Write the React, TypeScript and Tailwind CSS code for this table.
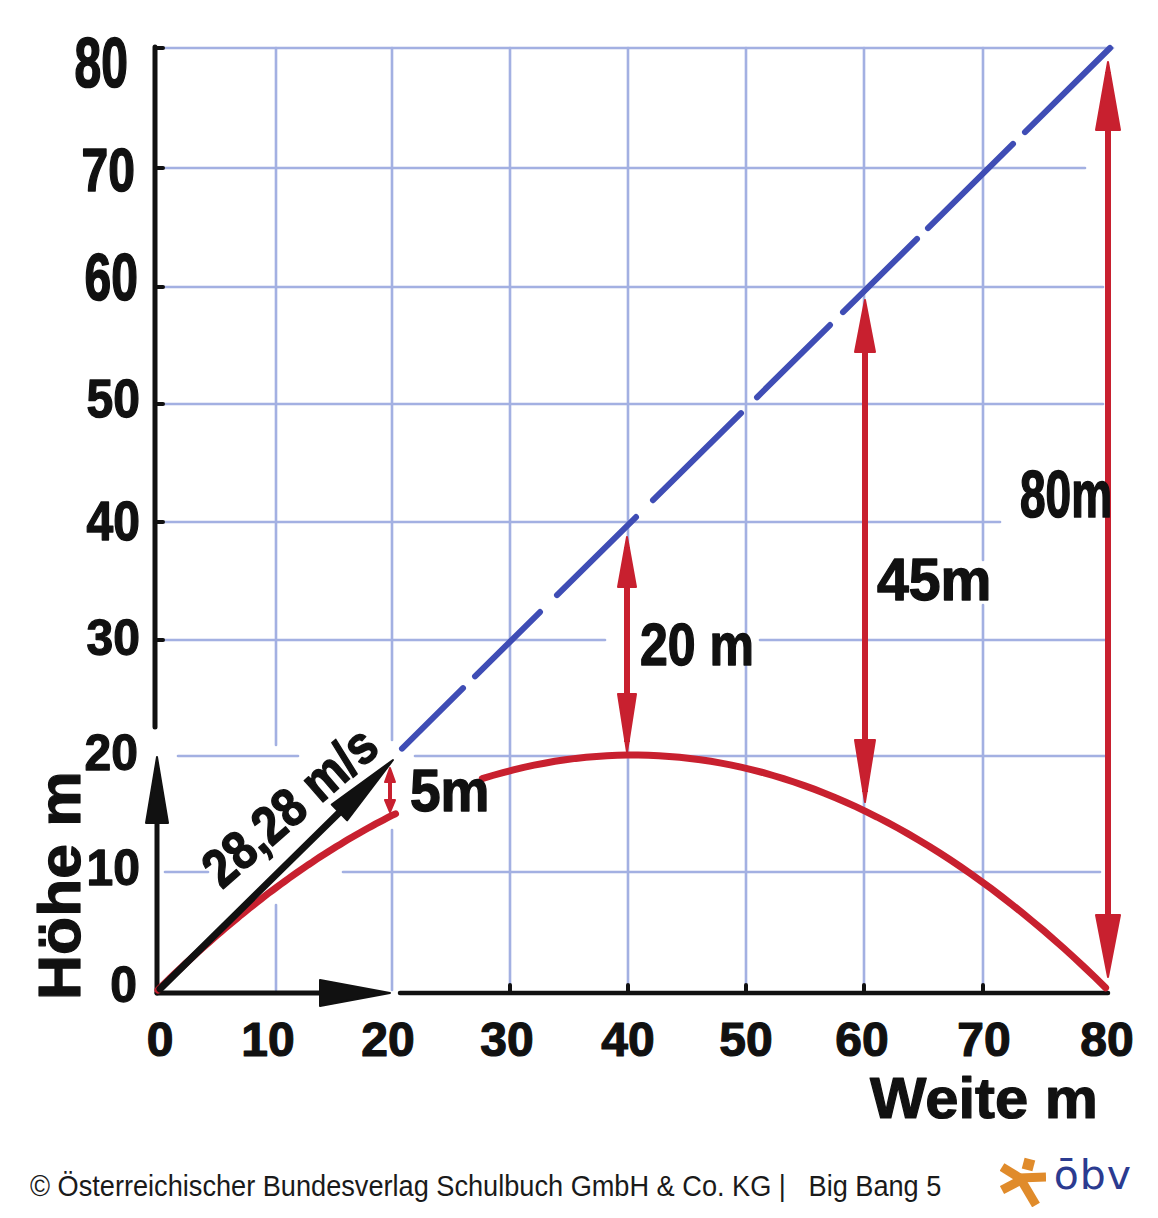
import React from "react";

const RED = "#c8202f";
const BLUE = "#3f4db5";
const GRID = "#8d9ddb";
const INK = "#111111";

const X = (d: number) => 158 + d * 11.875;
const Y = (h: number) => 990 - h * 11.75;

function curve(d0: number, d1: number) {
  const pts: string[] = [];
  const n = 60;
  for (let i = 0; i <= n; i++) {
    const d = d0 + ((d1 - d0) * i) / n;
    const h = d - (d * d) / 80;
    pts.push(`${X(d).toFixed(1)},${Y(h).toFixed(1)}`);
  }
  return "M" + pts.join(" L");
}

function Label({
  x,
  y,
  text,
  size = 48,
  sx = 1,
  sy = 1,
  rot = 0,
  anchor = "start",
}: {
  x: number;
  y: number;
  text: string;
  size?: number;
  sx?: number;
  sy?: number;
  rot?: number;
  anchor?: "start" | "middle" | "end";
}) {
  return (
    <text
      transform={`translate(${x} ${y}) rotate(${rot}) scale(${sx} ${sy})`}
      x={0}
      y={0}
      fontSize={size}
      fontFamily="'Liberation Sans', Arial, sans-serif"
      fontWeight={700}
      fill={INK}
      stroke={INK}
      strokeWidth={1.2}
      strokeLinejoin="round"
      textAnchor={anchor}
    >
      {text}
    </text>
  );
}

function VArrow({
  x,
  top,
  bottom,
  headTop,
  headBottom,
  hw,
  w = 6,
}: {
  x: number;
  top: number;
  bottom: number;
  headTop: number;
  headBottom: number;
  hw: number;
  w?: number;
}) {
  return (
    <g>
      <line x1={x} y1={top + 10} x2={x} y2={bottom - 10} stroke={RED} strokeWidth={w} />
      <polygon
        points={`${x},${top} ${x - hw},${top + headTop} ${x + hw},${top + headTop}`}
        fill={RED}
        stroke={RED}
        strokeWidth={2}
        strokeLinejoin="round"
      />
      <polygon
        points={`${x},${bottom} ${x - hw},${bottom - headBottom} ${x + hw},${bottom - headBottom}`}
        fill={RED}
        stroke={RED}
        strokeWidth={2}
        strokeLinejoin="round"
      />
    </g>
  );
}

export default function App() {
  const vLines: [number, number, number][] = [
    [276, 48, 745],
    [276, 905, 990],
    [392, 48, 740],
    [392, 830, 990],
    [510, 48, 990],
    [628, 48, 990],
    [746, 48, 990],
    [864, 48, 990],
    [983, 48, 560],
    [983, 605, 990],
  ];
  const hLines: [number, number, number][] = [
    [48, 160, 1113],
    [168, 160, 1085],
    [287, 160, 1103],
    [404, 160, 1103],
    [522, 160, 1000],
    [640, 160, 605],
    [640, 760, 1108],
    [756, 178, 298],
    [756, 415, 1108],
    [872, 165, 208],
    [872, 343, 1100],
  ];
  const dashes: [number, number][] = [
    [402, 463],
    [475, 540],
    [557, 636],
    [653, 741],
    [757, 830],
    [843, 917],
    [928, 1013],
    [1025, 1110],
  ];
  const by = (x: number) => 990 - 0.9895 * (x - 158);

  const yLabels: [string, number, number, number][] = [
    ["80", 128, 87, 1.45],
    ["70", 135, 191, 1.28],
    ["60", 138, 300, 1.4],
    ["50", 140, 417, 1.1],
    ["40", 140, 540, 1.15],
    ["30", 140, 655, 1.05],
    ["20", 138, 770, 1.05],
    ["10", 140, 885, 1.05],
    ["0", 137, 1002, 1.05],
  ];
  const xLabels: [string, number][] = [
    ["0", 160],
    ["10", 268],
    ["20", 388],
    ["30", 507],
    ["40", 628],
    ["50", 746],
    ["60", 862],
    ["70", 984],
    ["80", 1107],
  ];

  // velocity arrow head
  const tip = { x: 393, y: 760 };
  const ux = 0.7147;
  const uy = -0.6995;
  const L = 75;
  const HW = 11;
  const bx = tip.x - L * ux;
  const byy = tip.y - L * uy;
  const nx = 0.6995;
  const ny = 0.7147;

  return (
    <div className="w-[1158px] h-[1218px] bg-white overflow-hidden flex flex-col">
      <svg width={1158} height={1140} viewBox="0 0 1158 1140" className="block shrink-0">
        {/* grid */}
        <g stroke={GRID} strokeWidth={2.6} opacity={0.8} strokeLinecap="round">
          {vLines.map(([x, a, b], i) => (
            <line key={"v" + i} x1={x} y1={a} x2={x} y2={b} />
          ))}
          {hLines.map(([y, a, b], i) => (
            <line key={"h" + i} x1={a} y1={y} x2={b} y2={y} />
          ))}
        </g>

        {/* blue dashed line */}
        <g stroke={BLUE} strokeWidth={6} strokeLinecap="round">
          {dashes.map(([a, b], i) => (
            <line key={"d" + i} x1={a} y1={by(a)} x2={b} y2={by(b)} />
          ))}
        </g>

        {/* axes */}
        <g stroke={INK} strokeLinecap="round">
          <line x1={155} y1={47} x2={155} y2={727} strokeWidth={5} />
          {[48, 168, 287, 404, 522, 640].map((y) => (
            <line key={"yt" + y} x1={155} y1={y} x2={163} y2={y} strokeWidth={4} />
          ))}
          <line x1={157} y1={815} x2={157} y2={993} strokeWidth={5} />
          <line x1={157} y1={993} x2={325} y2={993} strokeWidth={5} />
          <line x1={400} y1={993} x2={1108} y2={993} strokeWidth={4.5} />
          {[510, 628, 746, 864, 983].map((x) => (
            <line key={"xt" + x} x1={x} y1={993} x2={x} y2={985} strokeWidth={4} />
          ))}
        </g>
        <polygon points="157,757 146,823 168,823" fill={INK} stroke={INK} strokeWidth={2} strokeLinejoin="round" />
        <polygon points="390,993 320,980 320,1006" fill={INK} stroke={INK} strokeWidth={2} strokeLinejoin="round" />

        {/* red trajectory */}
        <path d={curve(0, 20)} fill="none" stroke={RED} strokeWidth={7} strokeLinecap="round" />
        <path d={curve(27.3, 79.8)} fill="none" stroke={RED} strokeWidth={7} strokeLinecap="round" />

        {/* velocity arrow */}
        <line x1={160} y1={989} x2={bx + 5} y2={byy - 5} stroke={INK} strokeWidth={7} strokeLinecap="round" />
        <polygon
          points={`${tip.x},${tip.y} ${bx + HW * nx},${byy + HW * ny} ${bx - HW * nx},${byy - HW * ny}`}
          fill={INK}
          stroke={INK}
          strokeWidth={2}
          strokeLinejoin="round"
        />

        {/* red measurement arrows */}
        <VArrow x={390} top={768} bottom={812} headTop={14} headBottom={12} hw={5} w={4} />
        <VArrow x={627} top={537} bottom={752} headTop={50} headBottom={58} hw={9} />
        <VArrow x={865} top={300} bottom={802} headTop={52} headBottom={62} hw={10} />
        <VArrow x={1108} top={62} bottom={977} headTop={68} headBottom={62} hw={12} />

        {/* axis labels */}
        {yLabels.map(([t, x, y, sy]) => (
          <Label key={"yl" + t} x={x} y={y} text={t} size={48} sy={sy} anchor="end" />
        ))}
        {xLabels.map(([t, x]) => (
          <Label key={"xl" + t} x={x} y={1056} text={t} size={48} anchor="middle" />
        ))}
        <Label x={870} y={1118} text="Weite m" size={58} sx={1.03} />
        <Label x={80} y={1000} text="Höhe m" size={60} sx={1.04} rot={-90} />

        {/* value labels */}
        <Label x={222} y={890} text="28,28 m/s" size={47} sy={1.15} rot={-41} />
        <Label x={410} y={811} text="5m" size={50} sx={1.1} sy={1.2} />
        <Label x={640} y={665} text="20 m" size={50} sy={1.2} />
        <Label x={877} y={600} text="45m" size={52} sx={1.1} sy={1.15} />
        <Label x={1020} y={517} text="80m" size={46} sy={1.45} />
      </svg>

      <div className="h-[78px] flex items-start pl-[30px] pr-[26px]">
        <div className="w-[940px] shrink-0 mt-[31px] overflow-visible">
          <span className="inline-block origin-left scale-x-[0.905] whitespace-pre text-[30px] leading-[30px] text-[#1a1a1a] font-['Liberation_Sans',Arial,sans-serif]">
            {"© Österreichischer Bundesverlag Schulbuch GmbH & Co. KG |   Big Bang 5"}
          </span>
        </div>
        <div className="ml-auto mt-[15px] flex items-start">
          <svg width={46} height={50} viewBox="0 0 46 50" className="block mt-[2px]">
            <g stroke="#e08b2b" strokeWidth={9} strokeLinecap="butt" strokeLinejoin="round">
              <line x1={2} y1={10} x2={23} y2={23} />
              <line x1={23} y1={22} x2={2} y2={33} />
              <line x1={19} y1={21} x2={46} y2={20} />
              <line x1={20} y1={21} x2={36} y2={48} />
            </g>
            <rect x={23} y={2} width={11} height={11} fill="#e08b2b" transform="rotate(15 28.5 7.5)" />
          </svg>
          <span className="ml-[8px] -mt-[2px] text-[41px] leading-[44px] tracking-[1px] text-[#2b3b90] font-['DejaVu_Sans',sans-serif]">
            ōbv
          </span>
        </div>
      </div>
    </div>
  );
}
